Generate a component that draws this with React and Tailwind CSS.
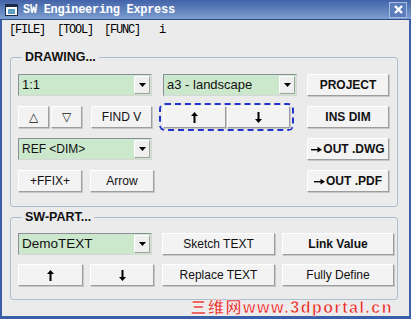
const sans = "font-['Liberation_Sans',Arial,sans-serif]"

function Btn({ w, bold, children, className = '' }) {
    return (
        <button
            className={`h-[22px] ${w} shrink-0 flex items-center justify-center bg-[#f3f3f3] border border-t-white border-l-white border-r-[#9d9d9d] border-b-[#9d9d9d] shadow-[1px_1px_0_#c8c8c8] text-[12px] text-[#111] ${bold ? 'font-bold' : ''} ${className}`}
        >
            {children}
        </button>
    )
}

function Combo({ text, size = 'text-[12px]' }) {
    return (
        <div className="w-[134px] h-[22px] shrink-0 flex border border-t-[#8a9099] border-l-[#8a9099] border-r-[#d6d6d6] border-b-[#d6d6d6] bg-[#cce8cc]">
            <div className={`flex-1 flex items-center pl-[3px] ${size} text-[#111]`}>{text}</div>
            <div className="w-[16px] m-[1px] flex items-center justify-center bg-[#efefef] border border-t-white border-l-white border-r-[#a0a0a0] border-b-[#a0a0a0]">
                <svg width="7" height="4" viewBox="0 0 7 4"><path d="M0 0h7L3.5 4z" fill="#000" /></svg>
            </div>
        </div>
    )
}

function Arrow({ up }) {
    return (
        <svg width="7" height="11" viewBox="0 0 7 11">
            {up ? (
                <g fill="#000"><path d="M3.5 0L7 4H0z" /><rect x="2.5" y="3" width="2" height="8" /></g>
            ) : (
                <g fill="#000"><path d="M3.5 11L7 7H0z" /><rect x="2.5" y="0" width="2" height="8" /></g>
            )}
        </svg>
    )
}

// small right arrow used in the OUT buttons
function RightArrow() {
    return (
        <svg width="11" height="7" viewBox="0 0 11 7" className="mr-[1px]">
            <rect x="0" y="3" width="8" height="1.4" fill="#000" />
            <path d="M11 3.7L6.5 0.8V6.6z" fill="#000" />
        </svg>
    )
}

function Group({ label, className = '', children }) {
    return (
        <fieldset className={`w-[388px] ml-[8px] border border-[#aebed2] rounded-[3px] pl-[7px] ${className}`}>
            <legend className="ml-[4px] px-[3px] text-[12.5px] leading-[14px] font-bold text-[#111]">{label}</legend>
            {children}
        </fieldset>
    )
}

export default function App() {
    return (
        <div className={`w-[411px] h-[319px] flex flex-col bg-[#ebebeb] relative overflow-hidden ${sans}`}>
            <div className="h-[20px] shrink-0 flex items-center bg-gradient-to-b from-[#4363a8] to-[#7d9fd0] border-b border-[#2e4c8c] pl-[5px] pr-[4px]">
                <svg width="13" height="12" viewBox="0 0 13 12">
                    <rect x="0.5" y="0.5" width="12" height="11" fill="#fff" stroke="#1d2b4a" />
                    <rect x="1" y="1" width="11" height="2" fill="#1d2b4a" />
                    <path d="M3 5h7v5H3z" fill="#5fa0c0" />
                </svg>
                <span className="ml-[5px] text-white font-bold text-[12px] font-['Liberation_Mono',monospace] tracking-[-0.3px]">SW Engineering Express</span>
                <div className="ml-auto w-[18px] h-[16px] flex items-center justify-center bg-[#5a7cbc] border border-[#a9bde0]">
                    <svg width="9" height="9" viewBox="0 0 9 9"><path d="M1 1l7 7M8 1L1 8" stroke="#fff" strokeWidth="2.4" /></svg>
                </div>
            </div>

            <div className="flex-1 flex flex-col border-l-2 border-r-2 border-b-[3px] border-[#3b5ea8]">
                <div className="h-[20px] shrink-0 flex items-center text-[12px] tracking-[-1.2px] font-['Liberation_Mono',monospace] text-[#000]">
                    <span className="ml-[7px] w-[48px]">[FILE]</span>
                    <span className="w-[47px]">[TOOL]</span>
                    <span className="w-[55px]">[FUNC]</span>
                    <span>i</span>
                </div>

                <Group label="DRAWING..." className="mt-[10px] pt-[10px] pb-[14px]">
                    <div className="flex flex-col gap-[10px]">
                        <div className="h-[22px] flex items-center">
                            <Combo text="1:1" size="text-[13px]" />
                            <div className="ml-[11px]"><Combo text="a3 - landscape" size="text-[13px]" /></div>
                            <Btn w="w-[82px] ml-[10px]" bold>PROJECT</Btn>
                        </div>
                        <div className="h-[22px] flex items-center">
                            <Btn w="w-[31px]"><span className="font-['DejaVu_Sans'] text-[12px]">△</span></Btn>
                            <Btn w="w-[31px] ml-[2px]"><span className="font-['DejaVu_Sans'] text-[12px]">▽</span></Btn>
                            <Btn w="w-[61px] ml-[9px]">FIND V</Btn>
                            <div className="ml-[7px] w-[135px] h-[28px] flex items-center px-[2px] border-2 border-dashed border-[#2233cc] rounded-[6px]">
                                <Btn w="w-[63px]"><Arrow up /></Btn>
                                <Btn w="w-[63px] ml-[1px]"><Arrow /></Btn>
                            </div>
                            <Btn w="w-[82px] ml-[13px]" bold>INS DIM</Btn>
                        </div>
                        <div className="h-[22px] flex items-center">
                            <Combo text="REF <DIM>" />
                            <Btn w="w-[82px] ml-[155px]" bold><RightArrow />OUT .DWG</Btn>
                        </div>
                        <div className="h-[22px] flex items-center">
                            <Btn w="w-[64px]">+FFIX+</Btn>
                            <Btn w="w-[64px] ml-[8px]">Arrow</Btn>
                            <Btn w="w-[82px] ml-[153px]" bold><RightArrow />OUT .PDF</Btn>
                        </div>
                    </div>
                </Group>

                <Group label="SW-PART..." className="mt-[3px] pt-[9px] pb-[13px]">
                    <div className="flex flex-col gap-[9px]">
                        <div className="h-[22px] flex items-center">
                            <Combo text="DemoTEXT" size="text-[13.5px]" />
                            <Btn w="w-[113px] ml-[10px]">Sketch TEXT</Btn>
                            <Btn w="w-[112px] ml-[7px]" bold>Link Value</Btn>
                        </div>
                        <div className="h-[22px] flex items-center">
                            <Btn w="w-[65px]"><Arrow up /></Btn>
                            <Btn w="w-[64px] ml-[7px]"><Arrow /></Btn>
                            <Btn w="w-[113px] ml-[8px]">Replace TEXT</Btn>
                            <Btn w="w-[112px] ml-[7px]">Fully Define</Btn>
                        </div>
                    </div>
                </Group>
            </div>

            <div className="absolute right-[18px] bottom-[3px] text-[16px] leading-[16px] font-bold tracking-[1.5px] text-[#e3231d] font-['Liberation_Sans','Noto_Sans_CJK_SC',sans-serif] [-webkit-text-stroke:0.5px_#fff]">
                三维网www.3dportal.cn
            </div>
        </div>
    )
}
